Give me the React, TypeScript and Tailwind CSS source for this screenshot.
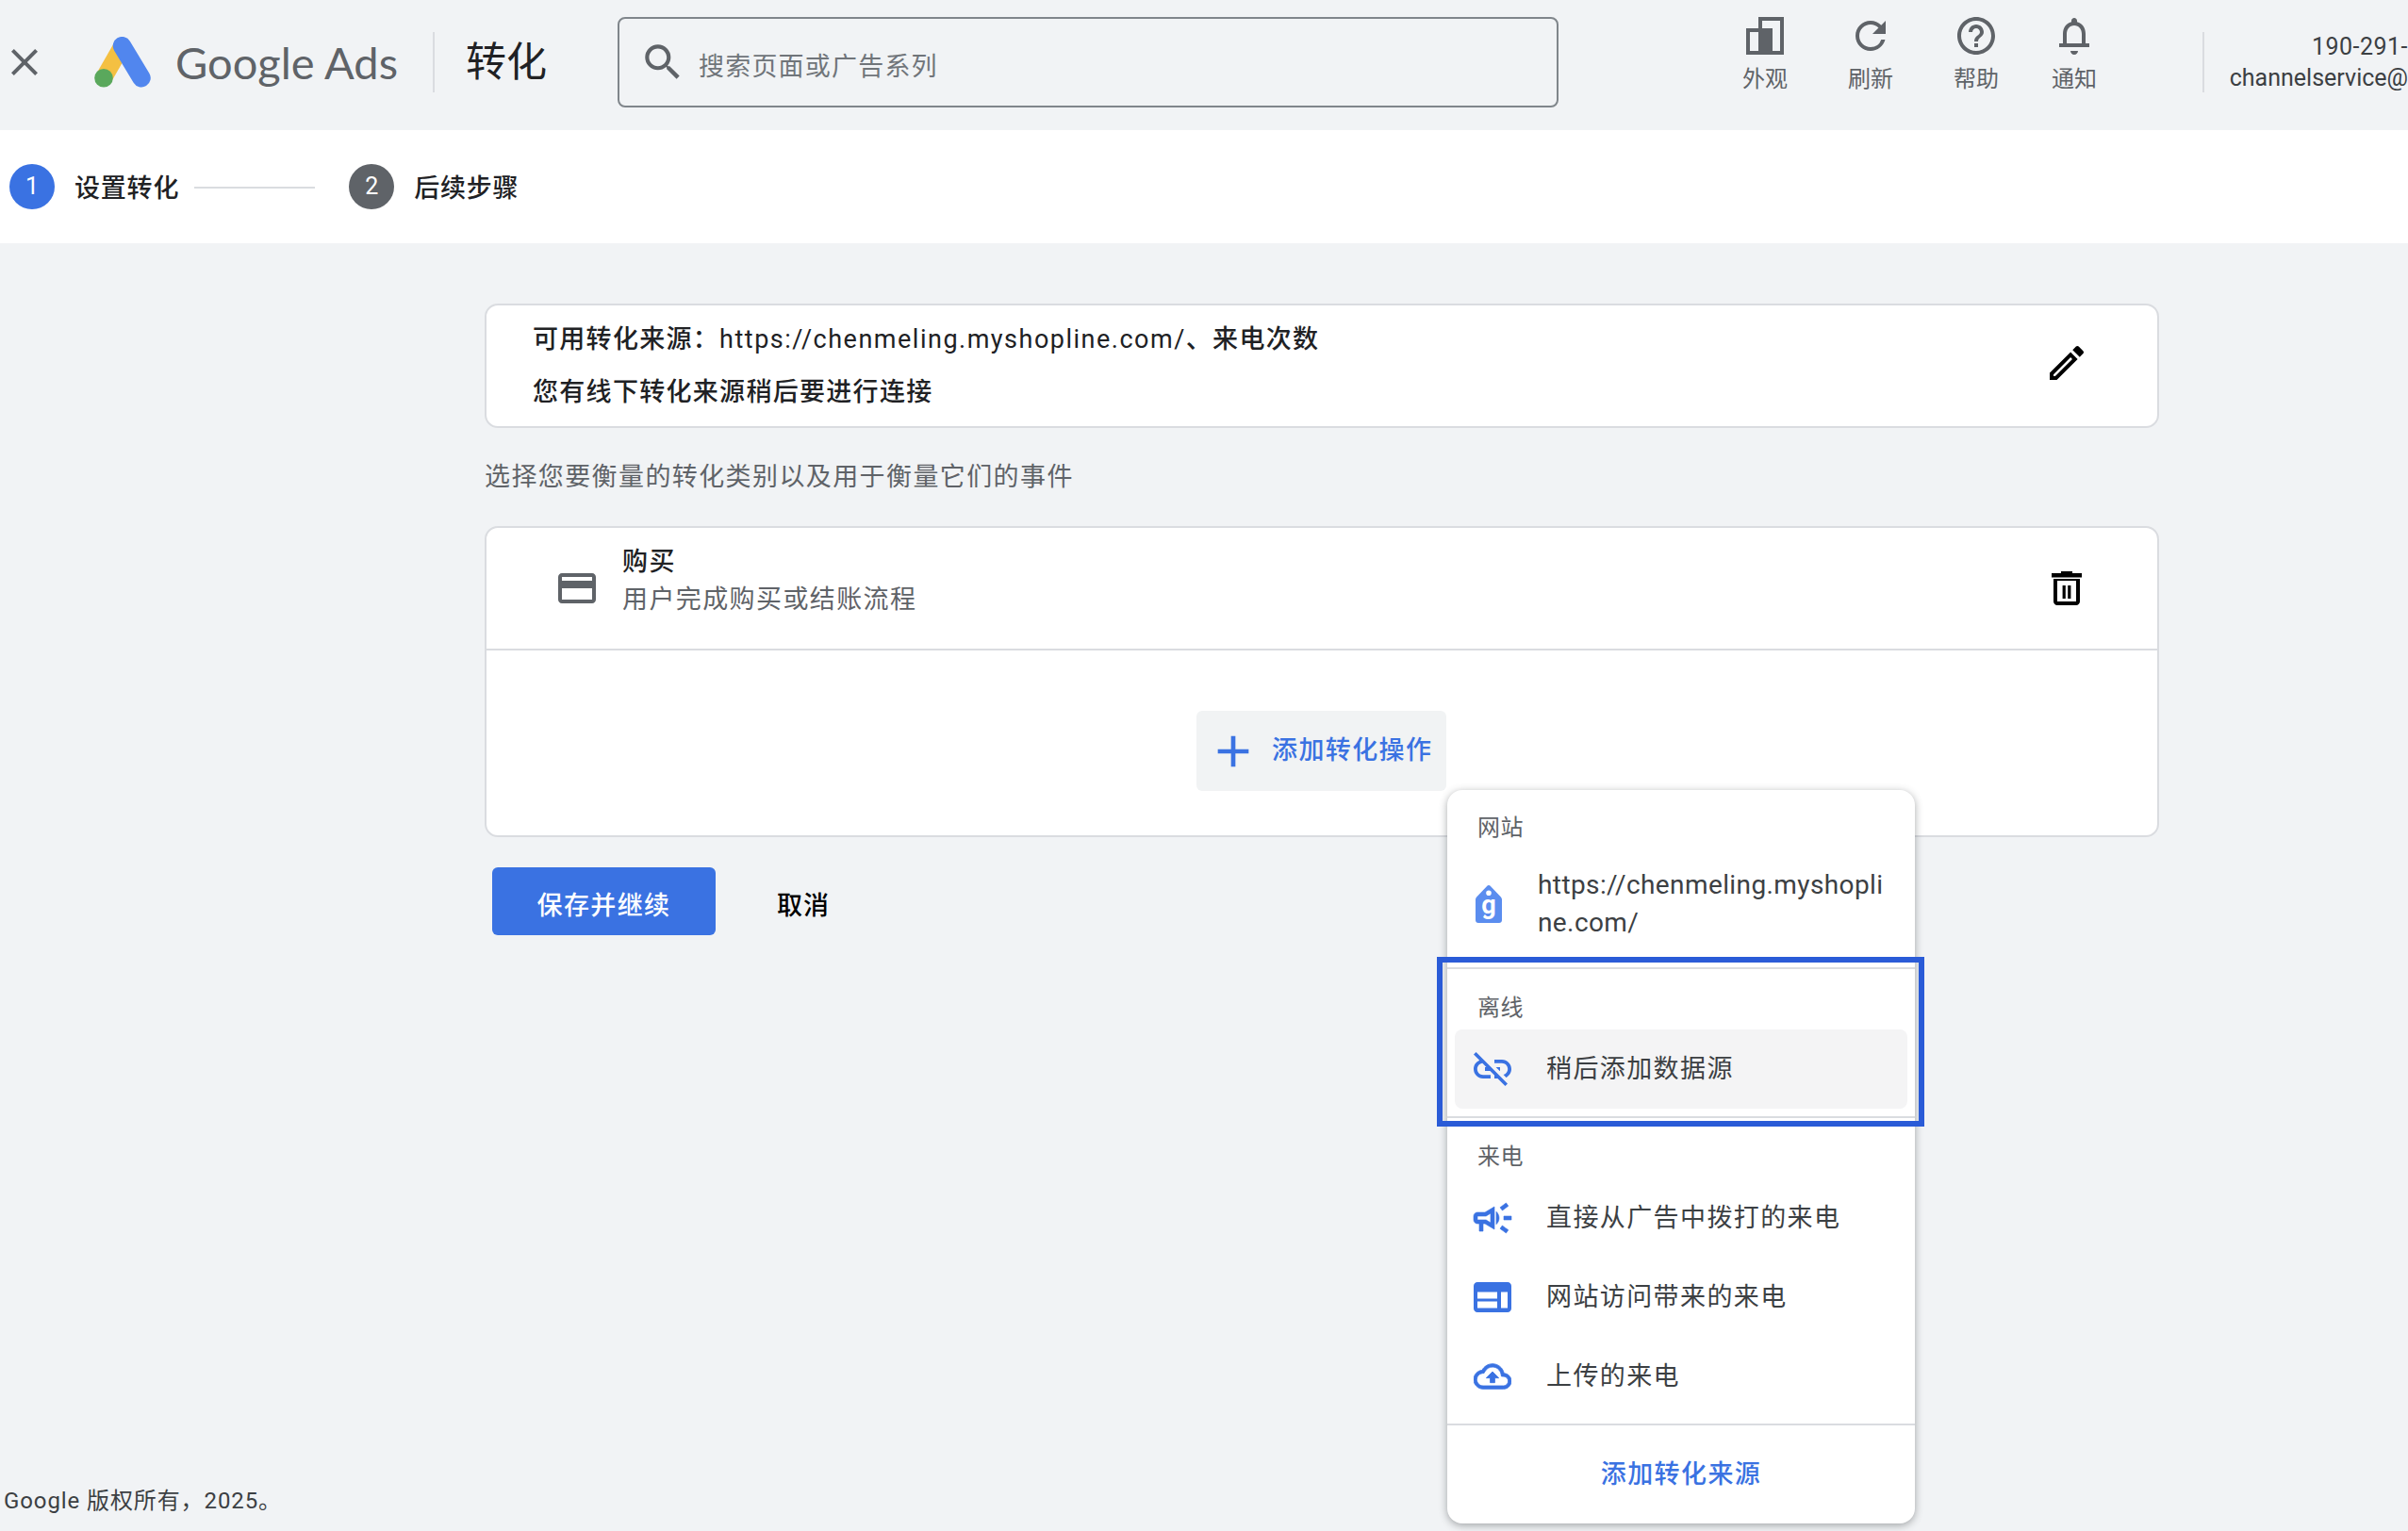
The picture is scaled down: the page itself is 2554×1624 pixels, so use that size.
import type { ReactNode } from 'react';

const P = {
  close: 'M19 6.41L17.59 5 12 10.59 6.41 5 5 6.41 10.59 12 5 17.59 6.41 19 12 13.41 17.59 19 19 17.59 13.41 12z',
  search: 'M15.5 14h-.79l-.28-.27A6.471 6.471 0 0 0 16 9.5 6.5 6.5 0 1 0 9.5 16c1.61 0 3.09-.59 4.23-1.57l.27.28v.79l5 4.99L20.49 19l-4.99-5zm-6 0C7.01 14 5 11.99 5 9.5S7.01 5 9.5 5 14 7.01 14 9.5 11.99 14 9.5 14z',
  refresh: 'M17.65 6.35A7.958 7.958 0 0 0 12 4c-4.42 0-7.99 3.58-7.99 8s3.57 8 7.99 8c3.73 0 6.84-2.55 7.73-6h-2.08A5.99 5.99 0 0 1 12 18c-3.31 0-6-2.69-6-6s2.69-6 6-6c1.66 0 3.14.69 4.22 1.78L13 11h7V4l-2.35 2.35z',
  help: 'M11 18h2v-2h-2v2zm1-16C6.48 2 2 6.48 2 12s4.48 10 10 10 10-4.48 10-10S17.52 2 12 2zm0 18c-4.41 0-8-3.59-8-8s3.59-8 8-8 8 3.59 8 8-3.59 8-8 8zm0-14c-2.21 0-4 1.79-4 4h2c0-1.1.9-2 2-2s2 .9 2 2c0 2-3 1.75-3 5h2c0-2.25 3-2.5 3-5 0-2.21-1.79-4-4-4z',
  bell: 'M12 22c1.1 0 2-.9 2-2h-4c0 1.1.9 2 2 2zm6-6v-5c0-3.07-1.63-5.64-4.5-6.32V4c0-.83-.67-1.5-1.5-1.5s-1.5.67-1.5 1.5v.68C7.64 5.36 6 7.92 6 11v5H4v2h16v-2h-2zm-2 0H8v-5c0-2.48 1.51-4.5 4-4.5s4 2.02 4 4.5v5z',
  card: 'M20 4H4c-1.11 0-1.99.89-1.99 2L2 18c0 1.11.89 2 2 2h16c1.11 0 2-.89 2-2V6c0-1.11-.89-2-2-2zm0 14H4v-6h16v6zm0-10H4V6h16v2z',
  edit: 'M3 17.25V21h3.75L17.81 9.94l-3.75-3.75L3 17.25zM5.92 19H5v-.92l9.06-9.06.92.92L5.92 19zM20.71 5.63l-2.34-2.34c-.2-.2-.45-.29-.71-.29s-.51.1-.7.29l-1.83 1.83 3.75 3.75 1.83-1.83c.39-.39.39-1.02 0-1.41z',
  trash: 'M9 3v1H4v2.300h16V4h-5V3H9zM5 7v12c0 1.100.9 2 2 2h10c1.100 0 2-.9 2-2V7H5zm2 1h10v11H7zm2.800 2.500h1.600v7H9.800zm2.800 0h1.600v7h-1.600z',
  plus: 'M19 13h-6v6h-2v-6H5v-2h6V5h2v6h6v2z',
  linkOff: 'M17 7h-4v1.9h4c1.71 0 3.1 1.39 3.1 3.1 0 1.43-.98 2.63-2.31 2.98l1.46 1.46C20.88 15.61 22 13.95 22 12c0-2.76-2.24-5-5-5zm-1 4h-2.19l2 2H16zM2 4.27l3.11 3.11C3.29 8.12 2 9.91 2 12c0 2.76 2.24 5 5 5h4v-1.9H7c-1.71 0-3.1-1.39-3.1-3.1 0-1.59 1.21-2.9 2.76-3.07L8.73 11H8v2h2.73L13 15.27V17h1.73l4.01 4L20 19.74 3.27 3 2 4.27z',
  campaign: 'M18 11v2h4v-2h-4zm-2 6.61c.96.71 2.21 1.65 3.2 2.39.4-.53.8-1.07 1.2-1.6-.99-.74-2.24-1.68-3.2-2.4-.4.54-.8 1.08-1.2 1.61zM20.4 5.6c-.4-.53-.8-1.07-1.2-1.6-.99.74-2.24 1.68-3.2 2.4.4.53.8 1.07 1.2 1.6.96-.72 2.21-1.65 3.2-2.4zM4 9c-1.1 0-2 .9-2 2v2c0 1.1.9 2 2 2h1v4h2v-4h1l5 3V6L8 9H4zm5.03 1.71L11 9.53v4.94l-1.97-1.18-.48-.29H4v-2h4.55l.48-.29zM15.5 12c0-1.33-.58-2.53-1.5-3.35v6.69c.92-.81 1.5-2.01 1.5-3.34z',
  web: 'M20 4H4c-1.1 0-2 .9-2 2v12c0 1.1.9 2 2 2h16c1.1 0 2-.9 2-2V6c0-1.1-.9-2-2-2zM4 9.300h10.500v3.400H4zm0 5h10.500v3.400H4zm12.500-5H20v8.400h-3.500z',
  upload: 'M19.35 10.04C18.67 6.59 15.64 4 12 4 9.11 4 6.6 5.64 5.35 8.04 2.34 8.36 0 10.91 0 14c0 3.31 2.69 6 6 6h13c2.76 0 5-2.24 5-5 0-2.64-2.05-4.78-4.65-4.96zM19 18H6c-2.21 0-4-1.79-4-4 0-2.05 1.53-3.76 3.56-3.97l1.07-.11.5-.95C8.08 7.14 9.94 6 12 6c2.62 0 4.88 1.86 5.39 4.43l.3 1.5 1.53.11c1.56.1 2.78 1.41 2.78 2.96 0 1.65-1.35 3-3 3zM8 13h2.55v3h2.9v-3H16l-4-4z',
};

function Icon({ d, className, evenodd }: { d: string; className: string; evenodd?: boolean }) {
  return (
    <svg viewBox="0 0 24 24" fill="currentColor" fillRule={evenodd ? 'evenodd' : 'nonzero'} className={className}>
      <path d={d} />
    </svg>
  );
}

function AdsLogo() {
  return (
    <svg viewBox="0 0 60 54" className="h-[54px] w-[60px] shrink-0">
      <line x1="10" y1="43.7" x2="29.5" y2="9.7" stroke="#f4c042" strokeWidth="18" />
      <line x1="29.5" y1="9.7" x2="50" y2="43.7" stroke="#5186ee" strokeWidth="19.5" strokeLinecap="round" />
      <circle cx="10" cy="43.7" r="9.8" fill="#5aa85c" />
    </svg>
  );
}

function AppearanceIcon() {
  return (
    <svg viewBox="0 0 40 40" className="h-10 w-10 text-[#5f6368]" fill="currentColor" fillRule="evenodd">
      <path d="M13 0h27v40H0V12h13zM4 16h9v20H4zM17 4h19v32h-8V12H17z" />
    </svg>
  );
}

function TagIcon() {
  return (
    <svg viewBox="0 0 28 40" className="h-10 w-7 shrink-0">
      <path
        fillRule="evenodd"
        fill="#5b8def"
        d="M14 0c.8 0 1.4.4 1.9.9l10.5 11c.9.9 1.6 2 1.6 3.4V37c0 1.7-1.3 3-3 3H3c-1.7 0-3-1.3-3-3V15.300c0-1.400.7-2.500 1.600-3.400l10.500-11C12.600.4 13.200 0 14 0zm0 5.500a2.800 2.800 0 1 0 0 5.600 2.800 2.800 0 0 0 0-5.600z"
      />
      <text x="14" y="30" textAnchor="middle" fontSize="27" fontWeight="700" fontFamily="Roboto" fill="#fff">
        g
      </text>
    </svg>
  );
}

function NavItem({ icon, label, width }: { icon: ReactNode; label: string; width: string }) {
  return (
    <div className={`flex flex-col items-center ${width}`}>
      <div className="flex h-12 items-center justify-center">{icon}</div>
      <span className="mt-[7px] text-[24px] leading-[30px] text-[#5f6368]">{label}</span>
    </div>
  );
}

function Step({ n, label, active }: { n: number; label: string; active?: boolean }) {
  return (
    <div className="flex items-center">
      <span
        className={`grid h-12 w-12 place-items-center rounded-full text-[25px] text-white ${active ? 'bg-[#3a72e2]' : 'bg-[#5f6368]'}`}
      >
        {n}
      </span>
      <span className="ml-[21px] pt-[4px] text-[27px] font-medium tracking-[0.800px] text-[#202124]">{label}</span>
    </div>
  );
}

function MenuRow({
  icon,
  label,
  hover,
  iconClass = 'h-12 w-12',
  evenodd,
}: {
  icon: string;
  label: string;
  hover?: boolean;
  iconClass?: string;
  evenodd?: boolean;
}) {
  return (
    <div className={`mx-2 flex h-[84px] items-center rounded-[8px] pl-[16px] ${hover ? 'bg-[#f4f4f5]' : ''}`}>
      <div className="flex h-12 w-12 shrink-0 items-center justify-center text-[#3a72e2]">
        <Icon d={icon} className={iconClass} evenodd={evenodd} />
      </div>
      <span className="ml-[33px] text-[27px] tracking-[1.400px] text-[#3c4043]">{label}</span>
    </div>
  );
}

function MenuLabel({ children, className }: { children: ReactNode; className: string }) {
  return (
    <div className={`flex items-center pl-[32px] text-[24px] tracking-[0.500px] text-[#5f6368] ${className}`}>
      {children}
    </div>
  );
}

function SourceMenu() {
  return (
    <div className="absolute left-[1535px] top-[838px] flex h-[778px] w-[496px] flex-col rounded-[16px] bg-white shadow-[0_2px_8px_rgba(60,64,67,0.45)]">
      <MenuLabel className="h-[78px] pt-[2px]">网站</MenuLabel>
      <div className="flex h-[86px] items-center pl-[30px]">
        <TagIcon />
        <span className="ml-[38px] w-[376px] break-all text-[28px] leading-[40px] tracking-[0.400px] text-[#3c4043]">
          https://chenmeling.myshopline.com/
        </span>
      </div>
      <div className="mt-[24px] h-[2px] bg-[#dadce0]" />
      <MenuLabel className="h-[64px] pt-[17px]">离线</MenuLabel>
      <MenuRow icon={P.linkOff} label="稍后添加数据源" hover />
      <div className="mt-2 h-[2px] bg-[#dadce0]" />
      <MenuLabel className="h-[64px] pt-[17px]">来电</MenuLabel>
      <MenuRow icon={P.campaign} label="直接从广告中拨打的来电" iconClass="h-12 w-12 stroke-current stroke-[0.3px]" />
      <MenuRow icon={P.web} label="网站访问带来的来电" evenodd />
      <MenuRow icon={P.upload} label="上传的来电" iconClass="h-10 w-10 stroke-current stroke-[0.5px]" />
      <div className="mt-2 h-[2px] bg-[#dadce0]" />
      <div className="flex flex-1 items-center justify-center text-[27px] font-medium tracking-[1.400px] text-[#3a72e2]">
        添加转化来源
      </div>
      {/* blue annotation frame drawn over the menu */}
      <div className="absolute left-[-11px] top-[177px] h-[180px] w-[517px] border-[6px] border-[#2a5bd7]" />
    </div>
  );
}

export default function App() {
  return (
    <div className="relative flex h-[1624px] w-full flex-col overflow-hidden bg-[#f1f3f5] font-[Roboto,'Noto_Sans_CJK_SC',sans-serif]">
      <header className="flex h-[138px] shrink-0 items-center pb-[6px]">
        <Icon d={P.close} className="ml-[2px] h-12 w-12 shrink-0 text-[#5f6368]" />
        <div className="ml-[50px]">
          <AdsLogo />
        </div>
        <span className="ml-[26px] w-[273px] font-[Lato,sans-serif] text-[47px] leading-none text-[#5f6368]">
          Google Ads
        </span>
        <span className="h-16 w-[2px] bg-[#dadce0]" />
        <span className="ml-[33px] w-[161px] text-[43px] text-[#202124]">转化</span>
        <div className="flex h-[96px] w-[998px] items-center rounded-[8px] border-2 border-[#80868b]">
          <Icon d={P.search} className="ml-[21px] h-[50px] w-[50px] text-[#5f6368]" />
          <span className="ml-[13px] pt-[10px] text-[27px] tracking-[1.200px] text-[#70757a]">搜索页面或广告系列</span>
        </div>
        <div className="ml-[163px] flex items-start self-start pt-[14px]">
          <NavItem width="w-[112px]" label="外观" icon={<AppearanceIcon />} />
          <NavItem width="w-[112px]" label="刷新" icon={<Icon d={P.refresh} className="h-12 w-12 text-[#5f6368]" />} />
          <NavItem width="w-[112px]" label="帮助" icon={<Icon d={P.help} className="h-12 w-12 text-[#5f6368]" />} />
          <NavItem width="w-[96px]" label="通知" icon={<Icon d={P.bell} className="h-12 w-12 text-[#5f6368]" />} />
        </div>
        <span className="ml-[88px] h-16 w-[2px] bg-[#dadce0]" />
        <div className="flex flex-1 flex-col items-end whitespace-nowrap text-[25px] leading-[33px] text-[#3c4043]">
          <span className="tracking-[0.500px]">190-291-</span>
          <span>channelservice@</span>
        </div>
      </header>

      <nav className="flex h-[120px] shrink-0 items-center bg-white pl-[10px]">
        <Step n={1} label="设置转化" active />
        <span className="ml-[16px] mr-[36px] mt-[2px] h-[2px] w-[128px] bg-[#dadce0]" />
        <Step n={2} label="后续步骤" />
      </nav>

      <main className="ml-[514px] mt-[64px] w-[1776px]">
        <section className="flex h-[132px] items-center justify-between rounded-[14px] border-2 border-[#dadce0] bg-white pl-[49px] pr-[72px]">
          <div className="text-[27px] font-medium tracking-[1.300px] text-[#202124]">
            <p className="leading-[56px]">
              可用转化来源：<span className="font-normal tracking-[1.500px]">https://chenmeling.myshopline.com/</span>、来电次数
            </p>
            <p className="leading-[56px]">您有线下转化来源稍后要进行连接</p>
          </div>
          <Icon d={P.edit} className="mb-[7px] h-12 w-12 text-black" />
        </section>

        <p className="mt-[34px] text-[27px] leading-[36px] tracking-[1.400px] text-[#5f6368]">选择您要衡量的转化类别以及用于衡量它们的事件</p>

        <section className="mt-[34px] h-[330px] rounded-[14px] border-2 border-[#dadce0] bg-white">
          <div className="flex h-[130px] items-center justify-between border-b-2 border-[#dadce0] pl-[72px] pr-[72px]">
            <div className="flex items-center">
              <Icon d={P.card} className="h-12 w-12 text-[#5f6368]" />
              <div className="mb-[16px] ml-[24px] text-[27px] leading-[40px] tracking-[1.400px]">
                <div className="font-medium text-[#202124]">购买</div>
                <div className="text-[#5f6368]">用户完成购买或结账流程</div>
              </div>
            </div>
            <Icon d={P.trash} className="h-12 w-12 text-black" evenodd />
          </div>
          <div className="flex h-[196px] items-start pl-[753px] pt-[64px]">
            <div className="flex h-[85px] w-[265px] items-center rounded-[6px] bg-[#f1f3f4] pl-[11px] text-[27px] font-medium tracking-[1.400px] text-[#3a72e2]">
              <Icon d={P.plus} className="h-14 w-14" />
              <span className="ml-[13px]">添加转化操作</span>
            </div>
          </div>
        </section>

        <div className="ml-2 mt-[32px] flex items-center">
          <button className="h-[72px] w-[237px] rounded-[6px] bg-[#3a72e2] pt-[10px] text-[27px] font-medium tracking-[1.400px] text-white">
            保存并继续
          </button>
          <span className="ml-[65px] pt-[10px] text-[27px] font-medium tracking-[1px] text-black">取消</span>
        </div>
      </main>

      <footer className="mt-auto pb-[16px] pl-[4px] text-[24px] leading-[32px] tracking-[0.900px] text-[#3c4043]">
        Google 版权所有，2025。
      </footer>

      <SourceMenu />
    </div>
  );
}
